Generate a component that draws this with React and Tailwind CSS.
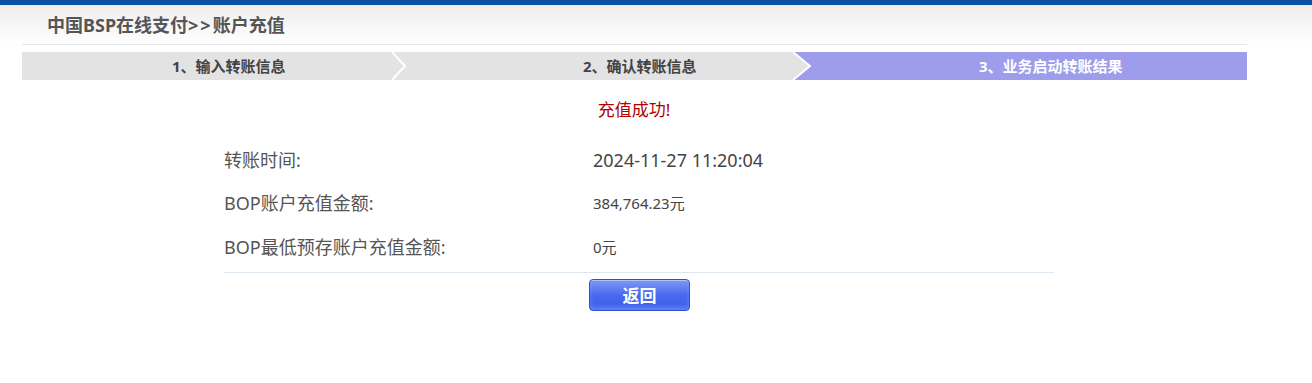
export default function App() {
  const font = { fontFamily: '"Noto Sans", "Noto Sans CJK SC", sans-serif' };
  return (
    <div className="w-[1312px] h-[383px] bg-white overflow-hidden" style={font}>
      <div className="h-[5px] bg-[#0a4fa3]" />
      <div className="h-[39px] bg-gradient-to-b from-[#ededed] to-white flex items-center pl-[47px]">
        <span className="text-[18px] font-bold text-[#555] leading-none">
          中国BSP在线支付<span className="tracking-[2px]">&gt;&gt;</span>账户充值
        </span>
      </div>
      <div className="ml-[22px] w-[1225px] h-px bg-[#e3e8ec]" />
      <div className="ml-[22px] w-[1225px] mt-[7px] h-[28px] flex text-[15px] font-bold leading-[28px]">
        <div className="w-[370px] bg-[#e3e3e3] text-[#444] pl-[150px]">1、输入转账信息</div>
        <div className="relative w-[401px] bg-[#e3e3e3] text-[#444] pl-[191px]">
          <svg className="absolute left-0 top-0" width="16" height="28" viewBox="0 0 16 28">
            <polyline points="0,0 13,14 0,28" fill="none" stroke="#fff" strokeWidth="2" />
          </svg>
          2、确认转账信息
        </div>
        <div className="relative w-[454px] bg-[#9d9deb] text-white pl-[186px]">
          <svg className="absolute left-0 top-0" width="20" height="28" viewBox="0 0 20 28">
            <polygon points="0,0 17,14 0,28" fill="#e3e3e3" />
            <polyline points="0,0 17,14 0,28" fill="none" stroke="#fff" strokeWidth="2" />
          </svg>
          3、业务启动转账结果
        </div>
      </div>
      <div className="flex justify-center mt-[18px]">
        <span className="text-[17px] text-[#b00000] leading-[24px] ml-[-44px]">充值成功!</span>
      </div>
      <div className="ml-[224px] w-[830px] mt-[16px]">
        <div className="flex items-center h-[44px] text-[#555]">
          <div className="w-[369px] text-[18px]">转账时间:</div>
          <div className="text-[18px] text-[#444]">2024-11-27 11:20:04</div>
        </div>
        <div className="flex items-center h-[43px] text-[#555]">
          <div className="w-[369px] text-[18px]">BOP账户充值金额:</div>
          <div className="text-[15px] text-[#444]">384,764.23元</div>
        </div>
        <div className="flex items-center h-[44px] text-[#555]">
          <div className="w-[369px] text-[18px]">BOP最低预存账户充值金额:</div>
          <div className="text-[15px] text-[#444]">0元</div>
        </div>
        <div className="h-px bg-[#dde8f0] mt-[3px]" />
      </div>
      <div className="ml-[589px] mt-[6px]">
        <button className="w-[101px] h-[32px] rounded-[4px] border border-[#2f50c8] bg-gradient-to-b from-[#7f98f4] via-[#4a69ef] to-[#3a5ce8] text-white font-bold text-[17px] leading-none shadow-[inset_0_1px_0_rgba(255,255,255,0.4),inset_0_-3px_4px_rgba(140,170,255,0.5)]">
          返回
        </button>
      </div>
    </div>
  );
}
